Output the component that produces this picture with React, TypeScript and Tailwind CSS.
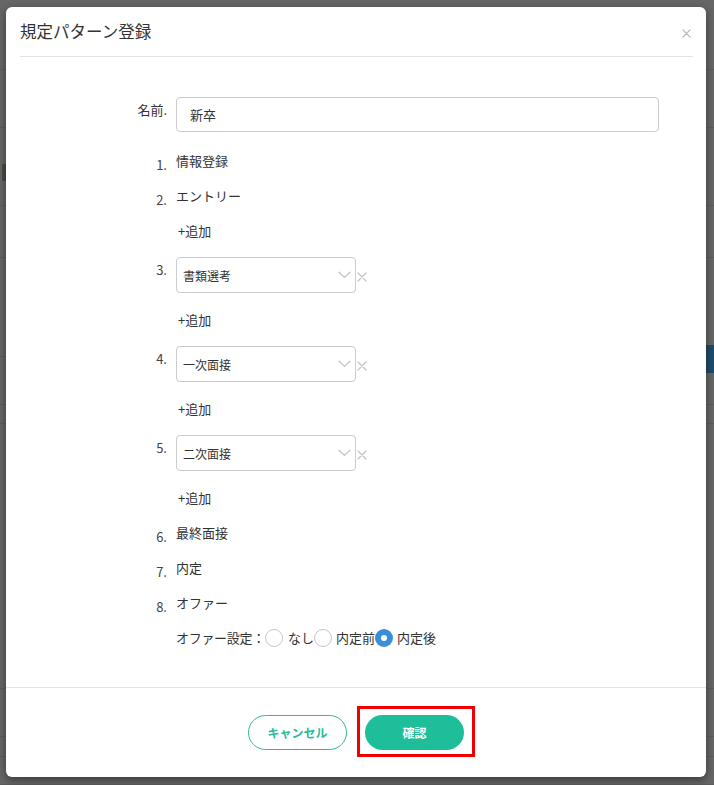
import React from "react";

const FONT = '"Noto Sans CJK JP", "Noto Sans", sans-serif';

function Chevron() {
  return (
    <svg width="13" height="8" viewBox="0 0 13 8" fill="none">
      <path d="M1 1.2 L6.5 6.4 L12 1.2" stroke="#c2c2c2" strokeWidth="1.3" strokeLinecap="round" strokeLinejoin="round" />
    </svg>
  );
}

function SmallX({ size = 9, color = "#c4c4c4" }: { size?: number; color?: string }) {
  return (
    <svg width={size} height={size} viewBox="0 0 10 10" fill="none">
      <path d="M1 1 L9 9 M9 1 L1 9" stroke={color} strokeWidth="1.3" strokeLinecap="round" />
    </svg>
  );
}

function Row({ num, children }: { num?: string; children: React.ReactNode }) {
  return (
    <div className="flex items-start mb-[18px]">
      <div className="w-[40px] h-[17px] shrink-0 text-right relative top-[4px] text-[13px] leading-[17px] text-[#444]">{num}</div>
      <div className="ml-[9px] flex-1 text-[13px] leading-[17px] text-[#333]">{children}</div>
    </div>
  );
}

function SelectBox({ value }: { value: string }) {
  return (
    <div className="flex items-center">
      <div className="w-[180px] h-[36px] border border-[#cccccc] rounded-[4px] flex items-center justify-between pl-[6px] pr-[4px] text-[12px] text-[#333]">
        <span>{value}</span>
        <Chevron />
      </div>
      <span className="ml-[1px] mt-[4px]">
        <SmallX size={10} />
      </span>
    </div>
  );
}

function Radio({ checked }: { checked?: boolean }) {
  return checked ? (
    <span className="w-[18px] h-[18px] rounded-full bg-[#3a8ed9] flex items-center justify-center shrink-0">
      <span className="w-[6px] h-[6px] rounded-full bg-white" />
    </span>
  ) : (
    <span className="w-[18px] h-[18px] rounded-full border border-[#c6c6c6] bg-white shrink-0" />
  );
}

export default function App() {
  const bgRows = [70, 58, 78, 52, 99, 48, 19, 265, 48, 20, 28];
  return (
    <div className="relative w-[714px] h-[785px] overflow-hidden bg-[#666666]" style={{ fontFamily: FONT }}>
      {/* dimmed page behind the dialog */}
      <div className="flex flex-col">
        {bgRows.map((h, i) => (
          <div key={i} className="border-b border-[#5c5c5c]" style={{ height: h }} />
        ))}
      </div>
      <div className="absolute left-[2px] top-[164px] w-[4px] h-[17px] bg-[#4e4a40]" />
      <div className="absolute right-0 top-[345px] w-[8px] h-[28px] bg-[#1f4b6b]" />

      {/* dialog */}
      <div className="absolute left-[6px] top-[7px] w-[700px] h-[770px] bg-white rounded-[6px] shadow-[0_3px_8px_rgba(0,0,0,0.45)] flex flex-col">
        <div className="ml-[14px] mr-[13px] h-[50px] border-b border-[#e3e3e3] flex items-center justify-between shrink-0">
          <span className="text-[16.5px] text-[#333]">規定パターン登録</span>
          <span className="mr-[2px] mt-[4px]">
            <SmallX size={9} color="#b5b5b5" />
          </span>
        </div>

        <div className="flex-1 pt-[40px] pl-[121px] pr-[47px]">
          <div className="flex items-start mb-[20px]">
            <div className="w-[40px] shrink-0 text-right pt-[4px] text-[13px] leading-[17px] text-[#333]">名前.</div>
            <div className="ml-[9px] flex-1 h-[35px] border border-[#cccccc] rounded-[4px] flex items-center pl-[13px] text-[13px] text-[#333]">
              新卒
            </div>
          </div>

          <Row num="1.">情報登録</Row>
          <Row num="2.">エントリー</Row>
          <Row>
            <span className="ml-[2px]">+追加</span>
          </Row>
          <Row num="3.">
            <SelectBox value="書類選考" />
          </Row>
          <Row>
            <span className="ml-[2px]">+追加</span>
          </Row>
          <Row num="4.">
            <SelectBox value="一次面接" />
          </Row>
          <Row>
            <span className="ml-[2px]">+追加</span>
          </Row>
          <Row num="5.">
            <SelectBox value="二次面接" />
          </Row>
          <Row>
            <span className="ml-[2px]">+追加</span>
          </Row>
          <Row num="6.">最終面接</Row>
          <Row num="7.">内定</Row>
          <Row num="8.">オファー</Row>
          <Row>
            <div className="flex items-center h-[17px]">
              <span className="tracking-[-0.3px]">オファー設定：</span>
              <Radio />
              <span className="ml-[5px]">なし</span>
              <Radio />
              <span className="ml-[4px]">内定前</span>
              <Radio checked />
              <span className="ml-[4px]">内定後</span>
            </div>
          </Row>
        </div>

        <div className="h-[90px] border-t border-[#e3e3e3] flex items-center justify-center gap-[18px] shrink-0">
          <button className="w-[99px] h-[35px] rounded-full border border-[#2bbb9c] text-[#2bbb9c] text-[12px] font-bold bg-white">
            キャンセル
          </button>
          <span className="relative">
            <button className="w-[99px] h-[35px] rounded-full bg-[#1fbe9b] text-white text-[12px] font-bold">
              確認
            </button>
            <span className="absolute left-[-8px] top-[-9px] w-[118px] h-[51px] border-[3px] border-[#f00000] pointer-events-none" />
          </span>
        </div>
      </div>
    </div>
  );
}
